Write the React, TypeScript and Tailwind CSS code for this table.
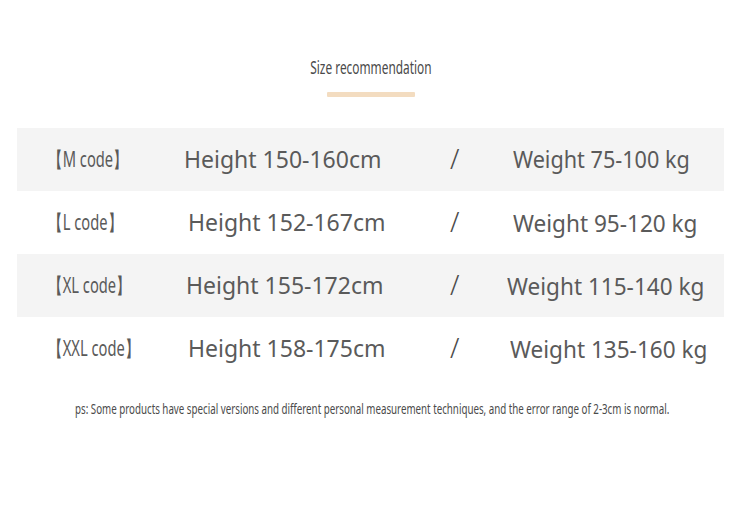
const rows = [
  { code: "【M code】", height: "Height 150-160cm", weight: "Weight 75-100 kg", hOff: 0, wOff: 0, wBig: false, band: true },
  { code: "【L code】", height: "Height 152-167cm", weight: "Weight 95-120 kg", hOff: 4, wOff: 0, wBig: true, band: false },
  { code: "【XL code】", height: "Height 155-172cm", weight: "Weight 115-140 kg", hOff: 2, wOff: -6, wBig: true, band: true },
  { code: "【XXL code】", height: "Height 158-175cm", weight: "Weight 135-160 kg", hOff: 4, wOff: -3, wBig: true, band: false },
];

export default function App() {
  return (
    <div className="w-[741px] h-[512px] bg-white text-[#5a5a5a] overflow-hidden" style={{ fontFamily: '"Noto Sans", "Open Sans", sans-serif' }}>
      <div className="flex flex-col items-center pt-[54px]">
        <div className="text-[18px] leading-[26px] text-[#4a4a4a] scale-x-[0.66]">Size recommendation</div>
        <div className="mt-[12px] w-[88px] h-[5px] bg-[#f3dcc0] rounded-[1px]" />
      </div>

      <div className="mt-[31px] px-[17px]">
        {rows.map((r) => (
          <div
            key={r.code}
            className={`grid grid-cols-[132px_262px_66px_1fr] items-center h-[63px] pl-[35px] ${r.band ? "bg-[#f4f4f4]" : "bg-white"}`}
          >
            <div className="text-[21px] whitespace-nowrap -ml-[4px]">
              <span className="inline-block origin-left scale-x-[0.7]">{r.code}</span>
            </div>
            <div className="text-[23px] whitespace-nowrap" style={{ paddingLeft: r.hOff }}>
              {r.height}
            </div>
            <div className="text-[27px] font-light text-[#4a4a4a] pl-[4px]">/</div>
            <div className={`whitespace-nowrap ${r.wBig ? "text-[24px]" : "text-[23px]"}`} style={{ marginLeft: 1 + r.wOff }}>
              <span className="inline-block origin-left scale-x-[0.94]">{r.weight}</span>
            </div>
          </div>
        ))}
      </div>

      <div className="mt-[18px] pl-[75px] text-[15px] leading-[20px] text-[#4a4a4a] whitespace-nowrap">
        <span className="inline-block origin-left scale-x-[0.65]">
          ps: Some products have special versions and different personal measurement techniques, and the error range of 2-3cm is normal.
        </span>
      </div>
    </div>
  );
}
